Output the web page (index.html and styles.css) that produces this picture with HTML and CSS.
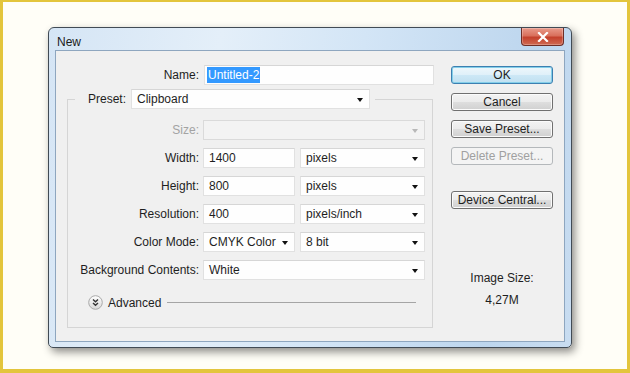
FILE: index.html
```html
<!DOCTYPE html>
<html lang="en">
<head>
    <meta charset="UTF-8">
    <title>New</title>
    <link rel="stylesheet" href="styles.css">
</head>
<body>
    <div class="page">
        <div class="window">
            <div class="titlebar">
                <span class="title">New</span>
                <span class="close">
                    <svg width="12" height="10" viewBox="0 0 12 10"><path d="M2 1 L10 9 M10 1 L2 9" stroke="#fff" stroke-width="2.2" stroke-linecap="square"/></svg>
                </span>
            </div>
            <div class="client">
                <div class="left">
                    <div class="name-row">
                        <span class="label">Name:</span>
                        <div class="field name-field"><span class="sel">Untitled-2</span></div>
                    </div>

                    <fieldset class="group">
                        <legend class="preset">
                            <span class="label">Preset:</span>
                            <div class="field select preset-select">Clipboard</div>
                        </legend>
                        <div class="rows">
                            <span class="label disabled">Size:</span>
                            <div class="field select disabled-field"></div>

                            <span class="label">Width:</span>
                            <div class="pair">
                                <div class="field">1400</div>
                                <div class="field select unit">pixels</div>
                            </div>

                            <span class="label">Height:</span>
                            <div class="pair">
                                <div class="field">800</div>
                                <div class="field select unit">pixels</div>
                            </div>

                            <span class="label">Resolution:</span>
                            <div class="pair">
                                <div class="field">400</div>
                                <div class="field select unit">pixels/inch</div>
                            </div>

                            <span class="label">Color Mode:</span>
                            <div class="pair">
                                <div class="field select mode">CMYK Color</div>
                                <div class="field select unit">8 bit</div>
                            </div>

                            <span class="label">Background Contents:</span>
                            <div class="field select">White</div>

                            <div class="advanced">
                                <svg class="adv-icon" width="15" height="15" viewBox="0 0 15 15">
                                    <defs>
                                        <linearGradient id="g" x1="0" y1="0" x2="0" y2="1">
                                            <stop offset="0" stop-color="#ffffff"/>
                                            <stop offset="1" stop-color="#d8d8d8"/>
                                        </linearGradient>
                                    </defs>
                                    <circle cx="7.5" cy="7.5" r="6.8" fill="url(#g)" stroke="#a9a9a9"/>
                                    <path d="M5 4.5 L7.5 6.8 L10 4.5 M5 8 L7.5 10.3 L10 8" fill="none" stroke="#333" stroke-width="1.4"/>
                                </svg>
                                <span>Advanced</span>
                                <span class="rule"></span>
                            </div>
                        </div>
                    </fieldset>
                </div>

                <div class="right">
                    <div class="btn btn-default">OK</div>
                    <div class="btn">Cancel</div>
                    <div class="btn">Save Preset...</div>
                    <div class="btn btn-disabled">Delete Preset...</div>
                    <div class="btn device">Device Central...</div>
                    <div class="size-label">Image Size:</div>
                    <div class="size-value">4,27M</div>
                </div>
            </div>
        </div>
    </div>
</body>
</html>
```

FILE: styles.css
```css
body { margin: 0; font-family: "Liberation Sans", Arial, sans-serif; font-size: 12px; color: #1e1e1e; }
.page { box-sizing: border-box; width: 630px; height: 373px; background-color: #fffef7; border-style: solid; border-color: #e3c53c; border-width: 2px 3px 4px 3px; padding: 25px 0 0 45px; }

.window { box-sizing: border-box; width: 524px; height: 321px; border: 1px solid #414b55; border-radius: 6px 6px 5px 5px; background: linear-gradient(100deg, #d5e5f5 0%, #e4eff9 30%, #d3e5f6 55%, #bdd6ee 85%, #c9ddf1 100%); box-shadow: 3px 4px 9px rgba(0,0,0,0.45); display: flex; flex-direction: column; }
.titlebar { height: 22px; display: flex; justify-content: space-between; align-items: flex-start; padding: 0 7px 0 8px; }
.title { padding-top: 7px; line-height: 14px; color: #1a1a1a; }
.close { width: 41px; height: 17px; display: flex; justify-content: center; align-items: center; border: 1px solid #6e2e26; border-top: none; border-radius: 0 0 4px 4px; background: linear-gradient(#e99a8a 0%, #d9705c 45%, #c4412c 55%, #cf6a52 100%); box-shadow: inset 0 0 0 1px rgba(255,255,255,0.25); }

.client { flex: 1; margin: 0 6px 5px 6px; border: 1px solid #8ea6bf; background-color: #f0f0f0; display: flex; }
.left { width: 384px; }
.label { text-align: right; line-height: 20px; white-space: nowrap; }
.label.disabled { color: #a3a3a3; }

.field { box-sizing: border-box; height: 20px; line-height: 18px; padding: 0 5px; background-color: #fefefe; border: 1px solid #e1e1e1; border-top-color: #d6d6d6; position: relative; white-space: nowrap; }
.select::after { content: ''; position: absolute; right: 6px; top: 8px; border-left: 3.5px solid transparent; border-right: 3.5px solid transparent; border-top: 4px solid #111; }
.disabled-field { background-color: #f3f3f3; border-color: #dadada; }
.disabled-field::after { border-top-color: #b8b8b8; }

.name-row { display: flex; gap: 5px; margin-top: 14px; }
.name-row .label { width: 143px; }
.name-field { width: 230px; padding-left: 2px; }
.sel { background-color: #3399ff; color: #fff; padding: 0 1px; line-height: 16px; display: inline-block; margin-top: 1px; }

.group { margin: 4px 0 0 11px; width: 366px; box-sizing: border-box; border: 1px solid #d5d5d5; padding: 0 6px 17px 0; }
.preset { display: flex; gap: 5px; padding: 0 5px 0 13px; margin-left: 7px; }
.preset .label { line-height: 20px; }
.preset-select { width: 239px; }

.rows { display: grid; grid-template-columns: 131px 222px; column-gap: 4px; row-gap: 8px; margin-top: 11px; }
.pair { display: flex; justify-content: space-between; }
.pair .field:first-child { width: 92px; }
.pair .mode { width: 88px; }
.unit { width: 125px; }

.advanced { grid-column: 1 / -1; display: flex; align-items: center; gap: 5px; padding-left: 20px; margin: 7px 9px 0 0; height: 15px; }
.adv-icon { display: block; }
.rule { flex: 1; height: 1px; background-color: #a5a5a5; margin-left: 1px; }

.right { margin-left: 11px; width: 102px; padding-top: 15px; display: flex; flex-direction: column; gap: 9px; }
.btn { box-sizing: border-box; height: 18px; line-height: 16px; text-align: center; border: 1px solid #707070; border-radius: 3px; background: linear-gradient(#f3f3f3 0%, #ebebeb 50%, #dedede 51%, #d0d0d0 100%); box-shadow: inset 0 0 0 1px #fbfbfb; }
.btn-default { border-color: #3c7fb1; background: linear-gradient(#eef7fc 0%, #dff0f9 50%, #cde8f6 51%, #c0e0f1 100%); box-shadow: inset 0 0 0 1px #84cfe9; }
.btn-disabled { color: #a0a0a0; border-color: #b4b8bb; background: #f4f4f4; box-shadow: none; }
.device { margin-top: 17px; }
.size-label { margin-top: 53px; text-align: center; line-height: 14px; }
.size-value { margin-top: -1px; text-align: center; line-height: 14px; }
```
